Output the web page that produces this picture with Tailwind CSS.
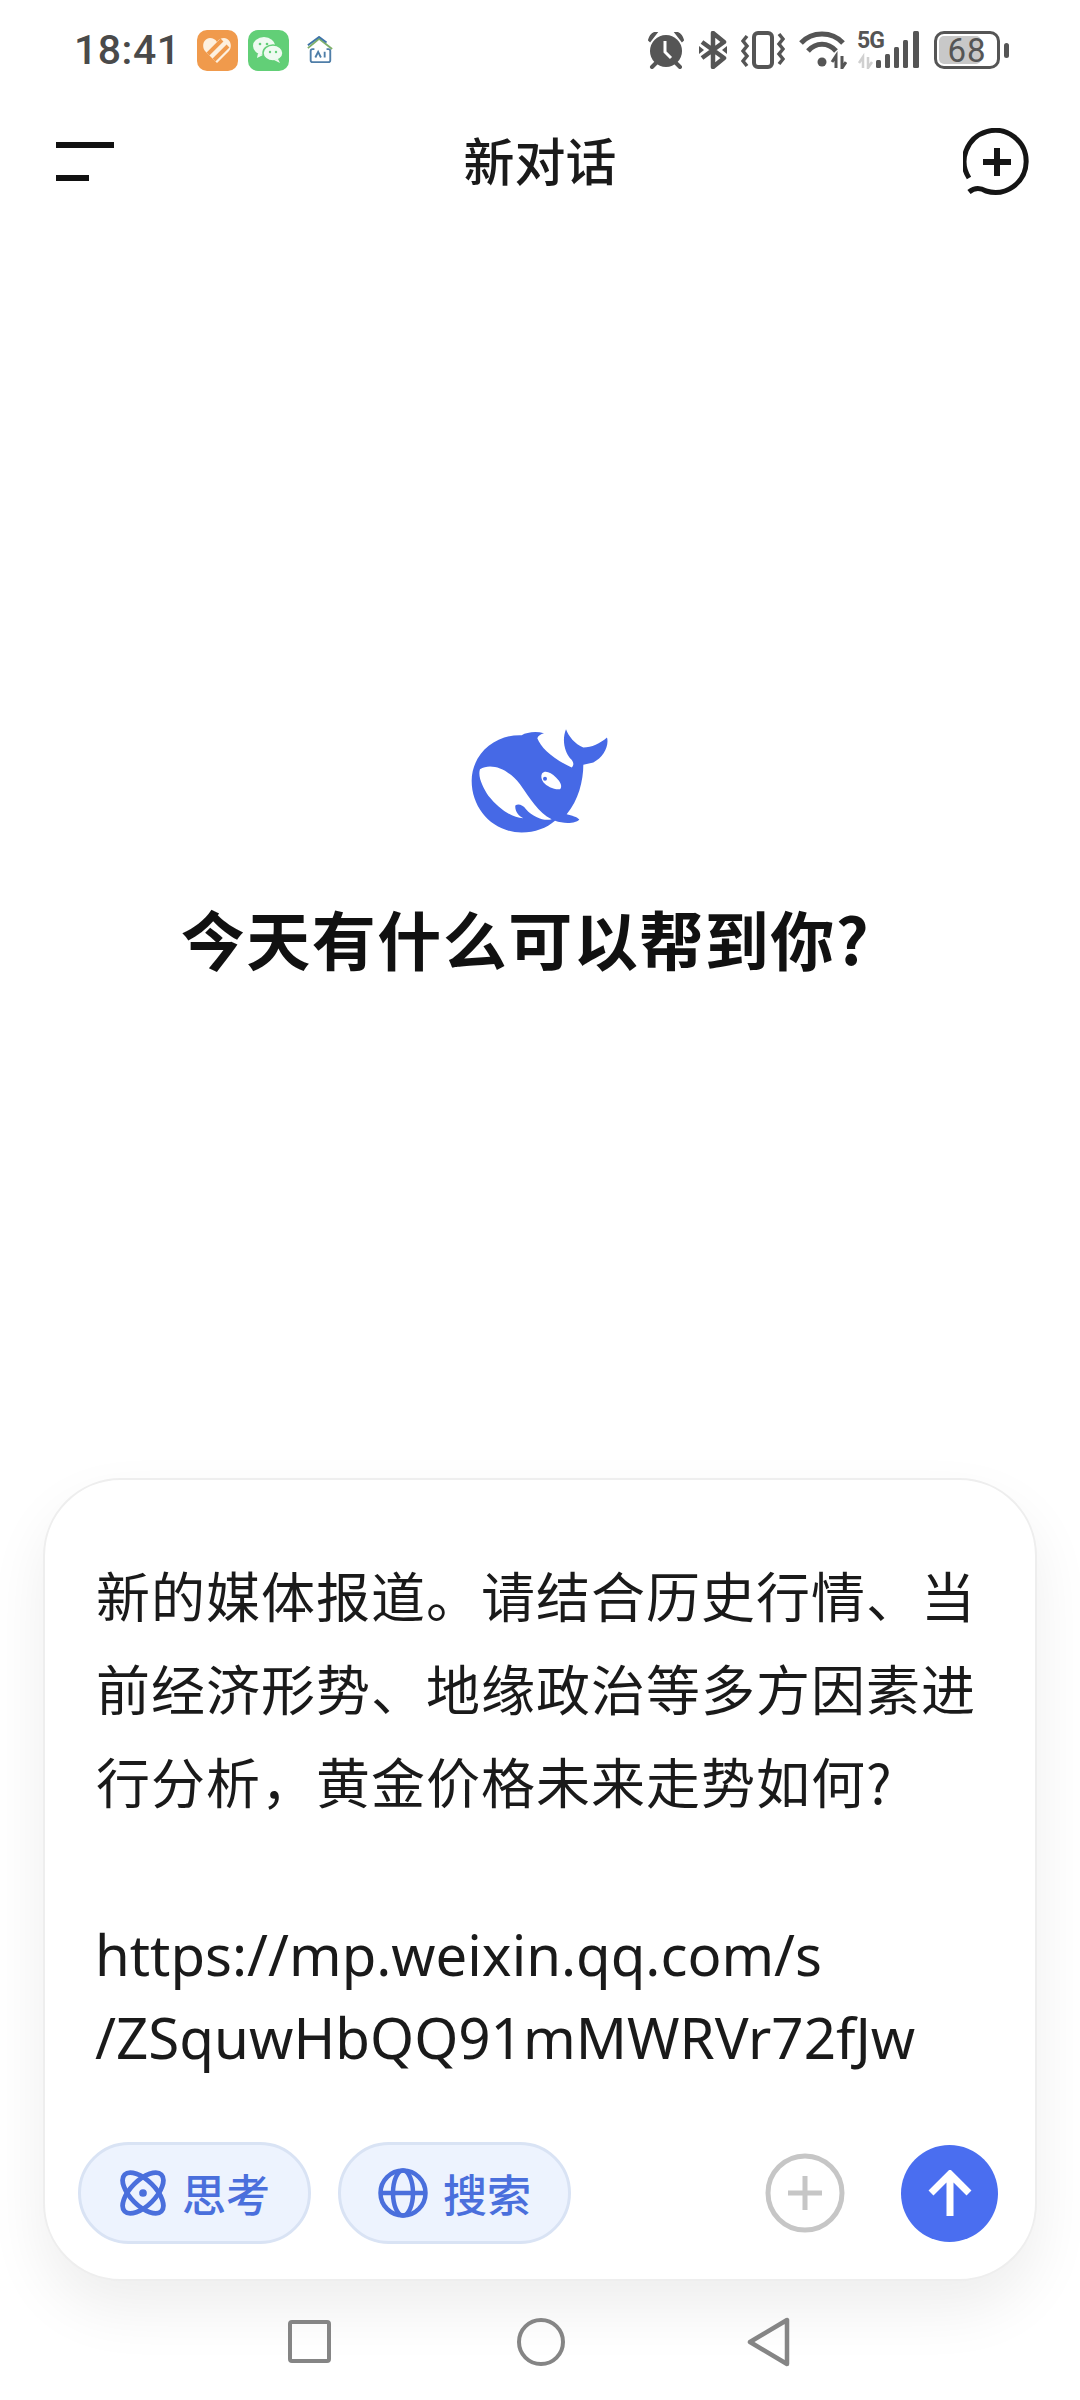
<!DOCTYPE html>
<html lang="zh-CN">
<head>
  <meta charset="UTF-8">
  <title>新对话</title>
  <script src="https://cdn.jsdelivr.net/npm/@tailwindcss/browser@4"></script>
</head>
<body class="bg-white font-['Noto_Sans_CJK_SC','Noto_Sans',sans-serif]">
  <div class="relative w-[1080px] h-[2400px] overflow-hidden flex flex-col bg-white">

    <!-- status bar -->
    <div class="h-[100px] pl-[74px] pr-[71px] flex items-center justify-between shrink-0">
      <div class="flex items-center">
        <span class="text-[41px] leading-[50px] font-medium text-[#4a4a4a] font-['Roboto',sans-serif] tracking-[0.5px]">18:41</span>
        <div class="ml-[16px] w-[41px] h-[41px] rounded-[10px] bg-[#f09a4c] flex items-center justify-center">
          <svg width="30" height="28" viewBox="0 0 30 28"><path d="M15 27 3 15C-1 10 2 2 8 2c3 0 5 1 7 4 2-3 4-4 7-4 6 0 9 8 5 13Z" fill="#fdf0df"/><path d="M6 18 20 4M12 24 26 10" stroke="#f09a4c" stroke-width="4"/></svg>
        </div>
        <div class="ml-[10px] w-[41px] h-[41px] rounded-[10px] bg-[#62cf77] flex items-center justify-center">
          <svg width="32" height="28" viewBox="0 0 32 28"><ellipse cx="12" cy="10" rx="11" ry="9" fill="#eefaf0"/><path d="M6 17 5 22l6-3Z" fill="#eefaf0"/><ellipse cx="21" cy="17" rx="10" ry="8" fill="#eefaf0" stroke="#62cf77" stroke-width="1.5"/><path d="M26 23l2 4-6-3Z" fill="#eefaf0"/><circle cx="8" cy="8" r="1.3" fill="#62cf77"/><circle cx="15" cy="8" r="1.3" fill="#62cf77"/><circle cx="18" cy="16" r="1.2" fill="#62cf77"/><circle cx="24" cy="16" r="1.2" fill="#62cf77"/></svg>
        </div>
        <div class="ml-[17px] w-[28px] h-[28px]">
          <svg width="28" height="28" viewBox="0 0 30 30" fill="none"><path d="M2 13 14 3l14 11" stroke="#7fb06a" stroke-width="2"/><path d="M2 10 14 1l8 6" stroke="#3f74a8" stroke-width="2"/><rect x="5" y="14" width="21" height="14" rx="2" stroke="#4f7ea8" stroke-width="2"/><rect x="9" y="11" width="13" height="6" fill="#fff"/><path d="M10 23l3-6 3 6M20 17v6" stroke="#4f7ea8" stroke-width="2"/></svg>
        </div>
      </div>
      <div class="flex items-center">
        <!-- alarm -->
        <svg width="36" height="37" viewBox="0 0 36 37"><circle cx="18" cy="19" r="16" fill="#555"/><path d="M1 8C2 4 5 1 9 0L2 9ZM35 8c-1-4-4-7-8-8l7 9Z" fill="#555" stroke="#555" stroke-width="2"/><path d="M4 35l4-4M32 35l-4-4" stroke="#555" stroke-width="4" stroke-linecap="round"/><path d="M17 9v11l6 6" stroke="#fff" stroke-width="3" fill="none"/></svg>
        <!-- bluetooth -->
        <svg class="ml-[15px]" width="28" height="38" viewBox="0 0 28 38" fill="none"><path d="M3 11 25 27 14 36V2l11 9L3 27" stroke="#555" stroke-width="4.5" stroke-linejoin="round"/><path d="M0 15l5 4-5 4ZM28 15l-5 4 5 4Z" fill="#555"/></svg>
        <!-- vibrate -->
        <svg class="ml-[14px]" width="44" height="38" viewBox="0 0 44 38" fill="none"><rect x="13" y="2" width="18" height="34" rx="4" stroke="#555" stroke-width="4"/><path d="M6 5 2 10l4 5-4 5 4 5-4 5 4 5M38 3l4 5-4 5 4 5-4 5 4 5-4 5" stroke="#555" stroke-width="3.5"/></svg>
        <!-- wifi -->
        <svg class="ml-[14px]" width="48" height="38" viewBox="0 0 48 38" fill="none"><path d="M2 12C13 0 33 0 44 12" stroke="#555" stroke-width="5"/><path d="M9 20C17 11 29 11 37 20" stroke="#555" stroke-width="5"/><circle cx="23" cy="31" r="4.5" fill="#555"/><path d="M37 37V25l-4 6M43 25v12l4-6" stroke="#555" stroke-width="3"/></svg>
        <!-- 5G signal -->
        <div class="ml-[10px] relative w-[62px] h-[38px]">
          <span class="absolute left-0 top-[-3px] text-[23px] leading-[26px] font-bold text-[#555] font-['Roboto',sans-serif] tracking-[-1px]">5G</span>
          <svg class="absolute left-0 top-0" width="62" height="38" viewBox="0 0 62 38" fill="none"><path d="M6 37V26l-4 6M11 26v11l4-6" stroke="#d0d0d0" stroke-width="2.5"/><rect x="19" y="29" width="5" height="8" rx="1.5" fill="#555"/><rect x="28" y="23" width="5" height="14" rx="1.5" fill="#555"/><rect x="37" y="16" width="5" height="21" rx="1.5" fill="#555"/><rect x="46" y="9" width="5" height="28" rx="1.5" fill="#555"/><rect x="56" y="0" width="6" height="37" rx="1.5" fill="#555"/></svg>
        </div>
        <!-- battery -->
        <div class="ml-[15px] flex items-center">
          <div class="relative w-[66px] h-[38px] rounded-[10px] border-[3px] border-[#555] p-[2px]">
            <div class="w-[75%] h-full rounded-[5px] bg-[#c8c8c8]"></div>
            <span class="absolute inset-0 flex items-center justify-center text-[33px] leading-none text-[#555] font-['Roboto',sans-serif] tracking-[1px]">68</span>
          </div>
          <div class="ml-[4px] w-[5px] h-[15px] rounded-full bg-[#555]"></div>
        </div>
      </div>
    </div>

    <!-- header -->
    <div class="h-[124px] pl-[56px] pr-[56px] grid grid-cols-[1fr_auto_1fr] items-center shrink-0">
      <div class="flex flex-col gap-[27px] mb-[1px]">
        <div class="w-[58px] h-[6px] bg-[#111]"></div>
        <div class="w-[33px] h-[6px] bg-[#111]"></div>
      </div>
      <h1 class="text-[51px] leading-[60px] text-[#1a1a1a] font-medium mb-[6px]">新对话</h1>
      <svg class="justify-self-end -mr-[7px]" width="68" height="68" viewBox="0 0 68 68" fill="none"><path d="M6 50A31 31 0 1 1 23 63C18 60 12 59 6 64" stroke="#151515" stroke-width="5"/><path d="M34 20v28M20 34h28" stroke="#151515" stroke-width="6"/></svg>
    </div>

    <!-- empty state -->
    <div class="flex flex-col items-center pt-[504px] shrink-0">
      <svg width="140" height="107" viewBox="150 82 420 320">
        <path fill="#4669e6" d="M305 103C320 95 345 90 372 97 362 100 354 104 352 112 362 140 400 175 455 200 464 192 460 180 450 172 436 155 424 120 438 85 445 105 465 130 490 140 515 140 540 128 561 110 568 135 550 170 520 185L490 192C490 240 475 300 440 340 455 344 472 348 478 356 470 368 432 370 405 360 380 382 345 395 305 395 220 395 155 325 155 240 155 160 225 100 305 103Z"/>
        <path fill="#fff" d="M180 205C215 185 265 205 300 250 330 292 355 335 395 355 375 362 340 350 318 325 308 312 295 308 286 314 284 330 295 345 310 352 275 352 235 322 205 285 190 262 172 228 180 205Z"/>
        <path fill="#fff" d="M366 218C375 208 392 214 408 230 422 243 428 258 420 265 404 268 380 256 370 244 364 236 362 226 366 218Z"/>
        <circle cx="375" cy="234" r="6" fill="#4669e6"/>
      </svg>
      <h2 class="mt-[63px] mr-[29px] text-[64px] leading-[78px] font-bold text-[#111] tracking-[1.5px]">今天有什么可以帮到你?</h2>
    </div>

    <!-- input card -->
    <div class="absolute left-[43px] top-[1478px] w-[994px] h-[803px] rounded-[78px] bg-white border-[2px] border-[#eeeeee] shadow-[0_28px_60px_rgba(0,0,0,0.07)] flex flex-col">
      <div class="pl-[51px] pr-[30px] pt-[68px] text-[#1a1a1a] text-[54px] leading-[93px] overflow-hidden">
        <p class="tracking-[1px]">新的媒体报道。请结合历史行情、当</p>
        <p class="tracking-[1px]">前经济形势、地缘政治等多方因素进</p>
        <p class="tracking-[1px]">行分析&#65292;黄金价格未来走势如何?</p>
        <p class="mt-[85px] -ml-[1px] font-['Noto_Sans',sans-serif] text-[56.3px] leading-[84px]">https://mp.weixin.qq.com/s</p>
        <p class="-ml-[1px] font-['Noto_Sans',sans-serif] text-[56.5px] leading-[84px]">/ZSquwHbQQ91mMWRVr72fJw</p>
      </div>
      <div class="flex items-center pl-[33px] pr-[37px] mt-auto pb-[35px]">
        <div class="w-[233px] h-[102px] rounded-full bg-[#edf3fe] border-[3px] border-[#d9e3f4] flex items-center justify-center gap-[15px]">
          <svg width="48" height="48" viewBox="0 0 50 50" fill="none" stroke="#4a6fdc" stroke-width="5"><ellipse cx="25" cy="25" rx="27" ry="13" transform="rotate(45 25 25)"/><ellipse cx="25" cy="25" rx="27" ry="13" transform="rotate(-45 25 25)"/><circle cx="25" cy="25" r="4" fill="#4a6fdc" stroke="none"/></svg>
          <span class="text-[44px] leading-[50px] text-[#4a6fdc] font-medium">思考</span>
        </div>
        <div class="ml-[27px] w-[233px] h-[102px] rounded-full bg-[#edf3fe] border-[3px] border-[#d9e3f4] flex items-center justify-center gap-[15px]">
          <svg width="50" height="50" viewBox="0 0 50 50" fill="none" stroke="#4a6fdc" stroke-width="4.5"><circle cx="25" cy="25" r="22.5"/><ellipse cx="25" cy="25" rx="10" ry="22.5"/><path d="M2.5 25h45"/></svg>
          <span class="text-[44px] leading-[50px] text-[#4a6fdc] font-medium">搜索</span>
        </div>
        <svg class="ml-auto" width="80" height="80" viewBox="0 0 80 80" fill="none" stroke="#c6c6c6" stroke-width="5"><circle cx="40" cy="40" r="37"/><path d="M40 23v34M23 40h34"/></svg>
        <div class="ml-[56px] w-[97px] h-[97px] rounded-full bg-[#4a6ef0] flex items-center justify-center">
          <svg width="44" height="46" viewBox="0 0 44 46" fill="none" stroke="#fff" stroke-width="7"><path d="M22 46V4M3 23 22 4l19 19"/></svg>
        </div>
      </div>
    </div>

    <!-- nav bar -->
    <div class="absolute left-0 right-0 bottom-0 h-[130px] flex items-start">
      <div class="ml-[288px] mt-[50px] w-[43px] h-[43px] rounded-[4px] border-[4px] border-[#858585]"></div>
      <div class="ml-[186px] mt-[48px] w-[48px] h-[48px] rounded-full border-[4px] border-[#858585]"></div>
      <svg class="ml-[182px] mt-[47px]" width="44" height="50" viewBox="0 0 44 50" fill="none"><path d="M3 25 40 3v44Z" stroke="#858585" stroke-width="4.5" stroke-linejoin="round"/></svg>
    </div>
  </div>
</body>
</html>
